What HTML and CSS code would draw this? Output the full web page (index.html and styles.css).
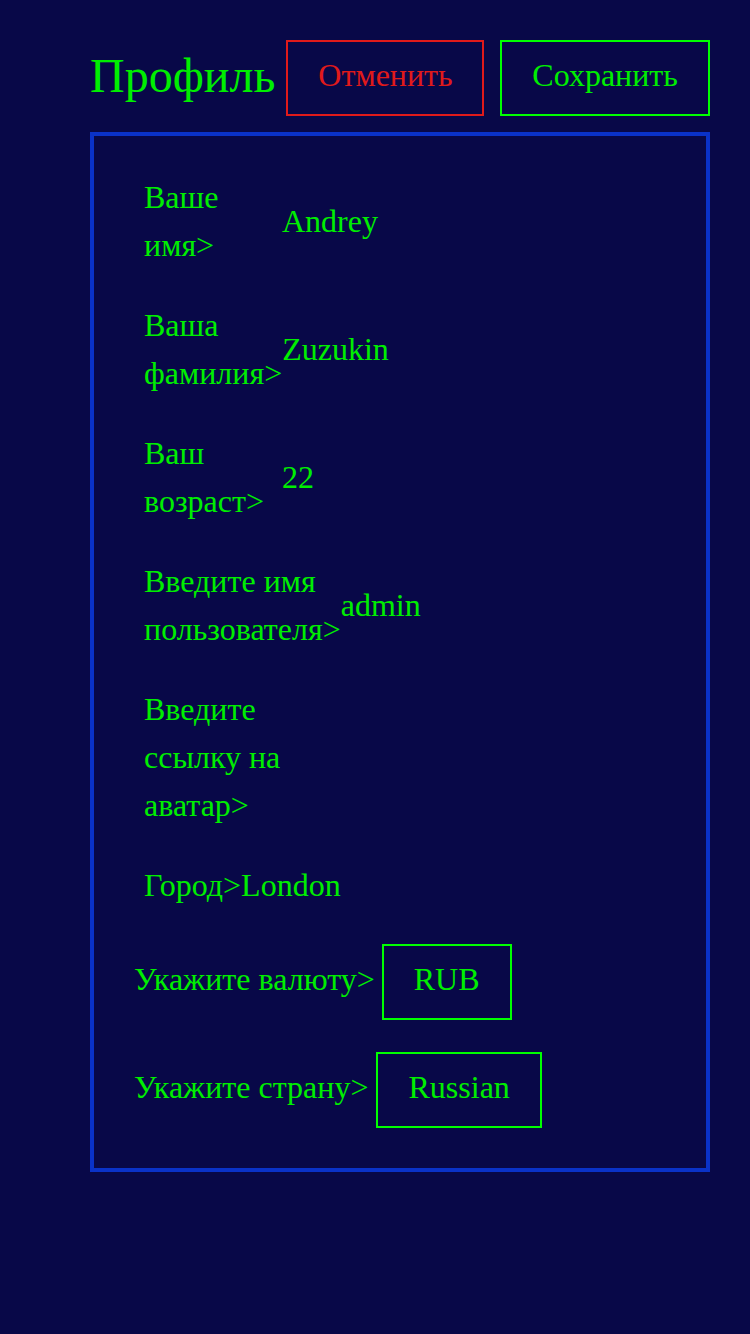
FILE: index.html
```html
<!DOCTYPE html>
<html lang="ru">
<head>
<meta charset="utf-8">
<title>Профиль</title>
<link rel="stylesheet" href="styles.css">
</head>
<body>
<div class="page">
  <header class="header">
    <h1 class="title">Профиль</h1>
    <button class="btn btn-cancel">Отменить</button>
    <button class="btn btn-save">Сохранить</button>
  </header>
  <main class="card">
    <div class="row">
      <div class="label">Ваше имя&gt;</div>
      <div class="value">Andrey</div>
    </div>
    <div class="row">
      <div class="label">Ваша фамилия&gt;</div>
      <div class="value">Zuzukin</div>
    </div>
    <div class="row">
      <div class="label">Ваш возраст&gt;</div>
      <div class="value">22</div>
    </div>
    <div class="row">
      <div class="label">Введите имя пользователя&gt;</div>
      <div class="value">admin</div>
    </div>
    <div class="row">
      <div class="label">Введите ссылку на аватар&gt;</div>
      <div class="value"></div>
    </div>
    <div class="row city">Город&gt;London</div>
    <div class="select-row first">
      <span class="select-label">Укажите валюту&gt;</span>
      <span class="select-box">RUB</span>
    </div>
    <div class="select-row">
      <span class="select-label">Укажите страну&gt;</span>
      <span class="select-box">Russian</span>
    </div>
  </main>
</div>
</body>
</html>
```

FILE: styles.css
```css
html, body {
  margin: 0;
  padding: 0;
  background: #080848;
}
body {
  font-family: "Liberation Serif", "Times New Roman", serif;
  color: #00ee00;
  min-height: 1334px;
}
.page {
  padding: 40px 40px 0 90px;
}
.header {
  display: flex;
  align-items: center;
  gap: 16px;
  margin-bottom: 16px;
}
.title {
  margin: 0 -5px 0 0;
  padding-bottom: 6px;
  font-size: 48px;
  font-weight: normal;
  line-height: 55px;
  color: #00ee00;
}
.btn {
  font-family: inherit;
  font-size: 32px;
  line-height: 36px;
  height: 76px;
  padding: 0 30px 6px;
  background: transparent;
  border: 2px solid;
  box-sizing: border-box;
}
.btn-cancel {
  color: #e01a1a;
  border-color: #e01a1a;
  width: 198px;
}
.btn-save {
  color: #00ee00;
  border-color: #00ff00;
  width: 210px;
}
.card {
  border: 4px solid #0a32c8;
  padding: 37px 40px 40px 50px;
  display: flex;
  flex-direction: column;
  gap: 32px;
}
.row {
  display: flex;
  align-items: center;
  font-size: 32px;
  line-height: 48px;
}
.label {
  width: 138px;
  min-width: min-content;
  flex-shrink: 0;
}
.select-row {
  display: flex;
  align-items: center;
  gap: 7px;
  font-size: 32px;
  line-height: 36px;
  margin-left: -10px;
}
.select-row.first {
  margin-top: 3px;
}
.select-row:not(.first) {
  gap: 8px;
}
.select-box {
  border: 2px solid #00ff00;
  height: 76px;
  box-sizing: border-box;
  padding: 0 30px 6px;
  display: flex;
  align-items: center;
}
.select-label {
  padding-bottom: 6px;
}
```
